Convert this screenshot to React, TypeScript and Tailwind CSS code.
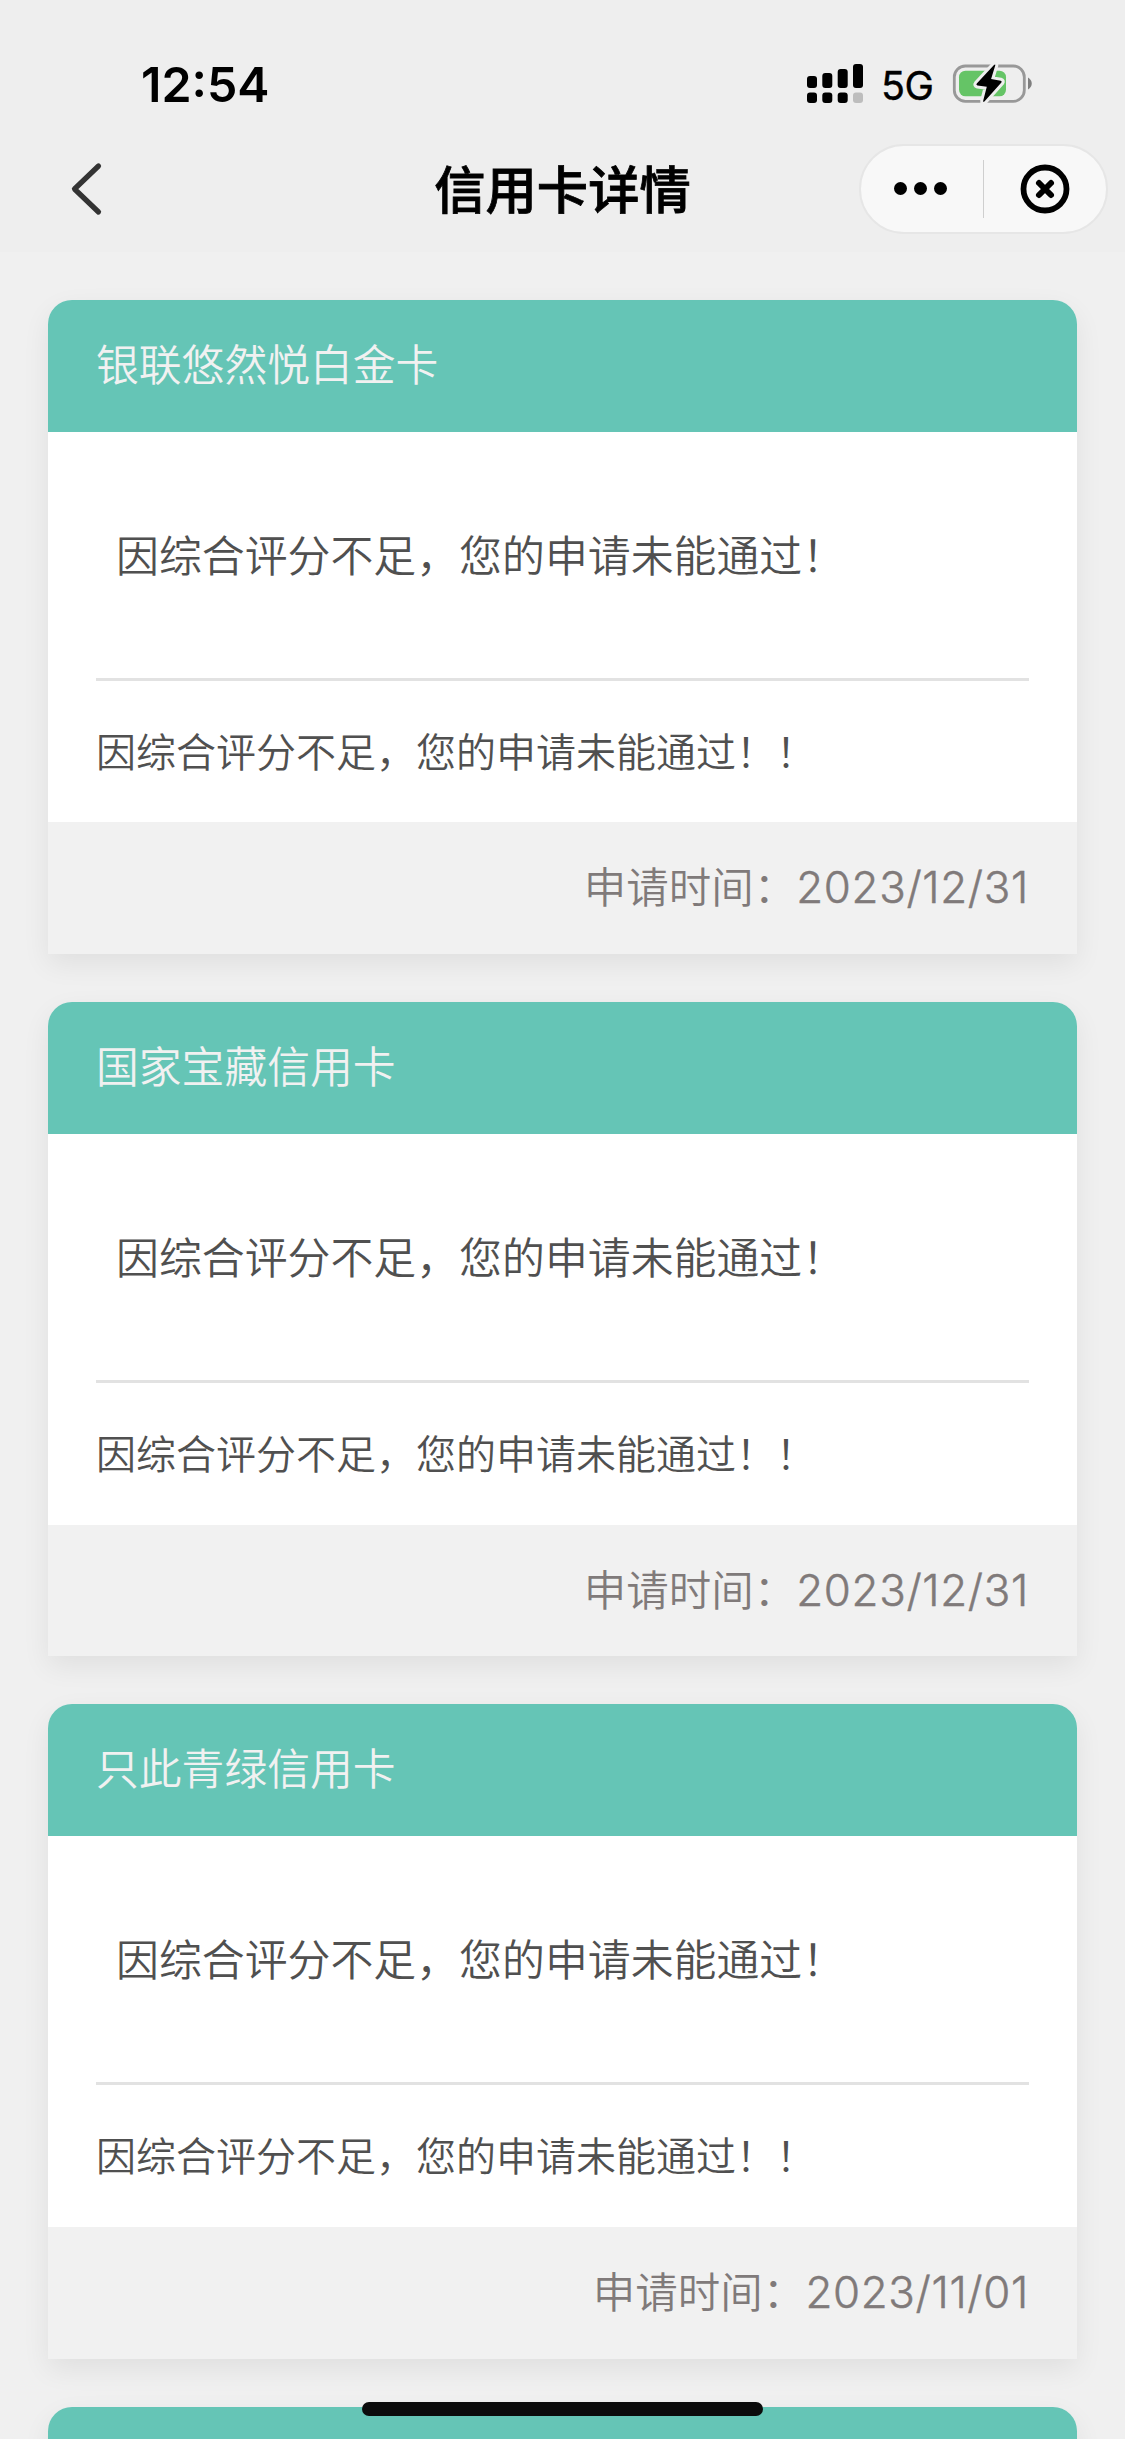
type Application = { name: string; date: string };

const applications: Application[] = [
  { name: "银联悠然悦白金卡", date: "2023/12/31" },
  { name: "国家宝藏信用卡", date: "2023/12/31" },
  { name: "只此青绿信用卡", date: "2023/11/01" },
];

function StatusIcons() {
  return (
    <svg className="-mt-px h-[48px] w-[240px]" viewBox="800 60 240 48" fill="#000">
      <rect x="807" y="76" width="10" height="12" rx="3" />
      <rect x="822.3" y="73" width="10" height="15" rx="3" />
      <rect x="837.7" y="69" width="10" height="19" rx="3" />
      <rect x="853" y="64" width="10" height="24" rx="3" />
      <rect x="807" y="92.5" width="10" height="10.5" rx="3" />
      <rect x="822.3" y="92.5" width="10" height="10.5" rx="3" />
      <rect x="837.7" y="92.5" width="10" height="10.5" rx="3" />
      <rect x="853" y="92.5" width="10" height="10.5" rx="3" fill="#bdbdbd" />
      <text x="881" y="99.5" fontSize="39.5" textLength="53" fontFamily="Inter, sans-serif" stroke="#000" strokeWidth="0.4">5G</text>
      <rect x="954.3" y="66" width="70" height="35.3" rx="11" fill="none" stroke="#989898" strokeWidth="2.8" />
      <rect x="959" y="70.7" width="47" height="25.6" rx="6.5" fill="#65c466" />
      <path d="M1028 77.5c5 3 5 9 0 12z" fill="#7e7e7e" />
      <path
        d="M994 65 976.8 83.6q-1.2 1.5.7 1.9l9.3 1.2-3.6 14.1q-.3 1.8 1.2.8l17-19q1-1.5-.7-1.9l-9.6-1.6 4.2-13.8q.2-1.5-1.3-.3z"
        stroke="#eee" strokeWidth="6" strokeLinejoin="round" paintOrder="stroke"
      />
    </svg>
  );
}

function Capsule() {
  return (
    <div className="flex h-[90px] w-[249px] items-center rounded-full border-2 border-[#e6e6e6] bg-[#f8f8f8]">
      <div className="flex w-[122px] justify-center gap-[7px] pr-[2px]">
        <i className="size-[13px] rounded-full bg-black" />
        <i className="size-[13px] rounded-full bg-black" />
        <i className="size-[13px] rounded-full bg-black" />
      </div>
      <div className="h-[58px] w-px bg-[#cfcfcf]" />
      <div className="flex flex-1 justify-center pl-px">
        <svg className="size-[50px]" viewBox="0 0 50 50" fill="none" stroke="#000" strokeLinecap="round">
          <circle cx="25" cy="25" r="21.5" strokeWidth="5.8" />
          <path d="m19 19 12 12m0-12L19 31" strokeWidth="6" />
        </svg>
      </div>
    </div>
  );
}

function CardHeader({ name }: { name: string }) {
  return (
    <div className="flex h-[132px] items-center rounded-t-[24px] bg-[#65c5b6] pl-[48px] text-[42.8px] font-[350] text-[#f1f1f1]">
      {name}
    </div>
  );
}

function Card({ name, date }: Application) {
  return (
    <section className="h-[654.3px] rounded-t-[24px] bg-[#f1f1f1] shadow-[0_10px_28px_rgba(0,0,0,0.07)]">
      <CardHeader name={name} />
      <div className="h-[390.7px] bg-white px-[48px] font-[350] text-[#505050]">
        <div className="flex h-[249px] items-center border-b-3 border-[#e2e2e2] pt-[2px] pl-[20px] text-[42.9px]">
          因综合评分不足，您的申请未能通过！
        </div>
        <p className="flex h-[141.7px] items-center pt-[2px] text-[40px]">因综合评分不足，您的申请未能通过！！</p>
      </div>
      <div className="flex h-[131.6px] items-center justify-end pr-[48px] text-[42.5px] font-[350] text-[#807a7a]">
        <span>申请时间：</span>
        <span className="text-[43.8px] font-light tracking-[0.7px] [-webkit-text-stroke:0.5px_#807a7a]">{date}</span>
      </div>
    </section>
  );
}

export default function App() {
  return (
    <div className="relative h-[2439px] w-[1125px] overflow-hidden bg-[#f0f0f0] font-['Inter','Noto_Sans_CJK_SC',sans-serif] whitespace-nowrap">
      <header className="h-[252px] bg-[#eee]">
        <div className="flex h-[143px] items-start justify-between pt-[61px] pr-[85px] pl-[141px]">
          <time className="text-[48.3px] leading-[48px] font-semibold">12:54</time>
          <StatusIcons />
        </div>
        <div className="grid h-[91px] grid-cols-3 items-center pr-[17px] pl-[17px]">
          <svg className="ml-[53px] h-[58px] w-[34px]" viewBox="0 0 34 58" fill="none" stroke="#333" strokeWidth="5.2" strokeLinecap="round" strokeLinejoin="round">
            <path d="M28.5 6 4.5 29l24 23" />
          </svg>
          <h1 className="pt-[2px] text-center text-[51.3px] leading-[80px] font-medium text-black [-webkit-text-stroke:0.8px_#000]">信用卡详情</h1>
          <div className="flex justify-end">
            <Capsule />
          </div>
        </div>
      </header>
      <main className="flex flex-col gap-[48px] pt-[47.7px] pr-[48px] pl-[48px]">
        {applications.map((a) => (
          <Card key={a.name} {...a} />
        ))}
        <section className="rounded-t-[24px] shadow-[0_10px_28px_rgba(0,0,0,0.07)]">
          <CardHeader name="" />
        </section>
      </main>
      <div className="absolute top-[2402px] left-[362px] h-[14px] w-[401px] rounded-full bg-[#0c0c0c]" />
    </div>
  );
}
